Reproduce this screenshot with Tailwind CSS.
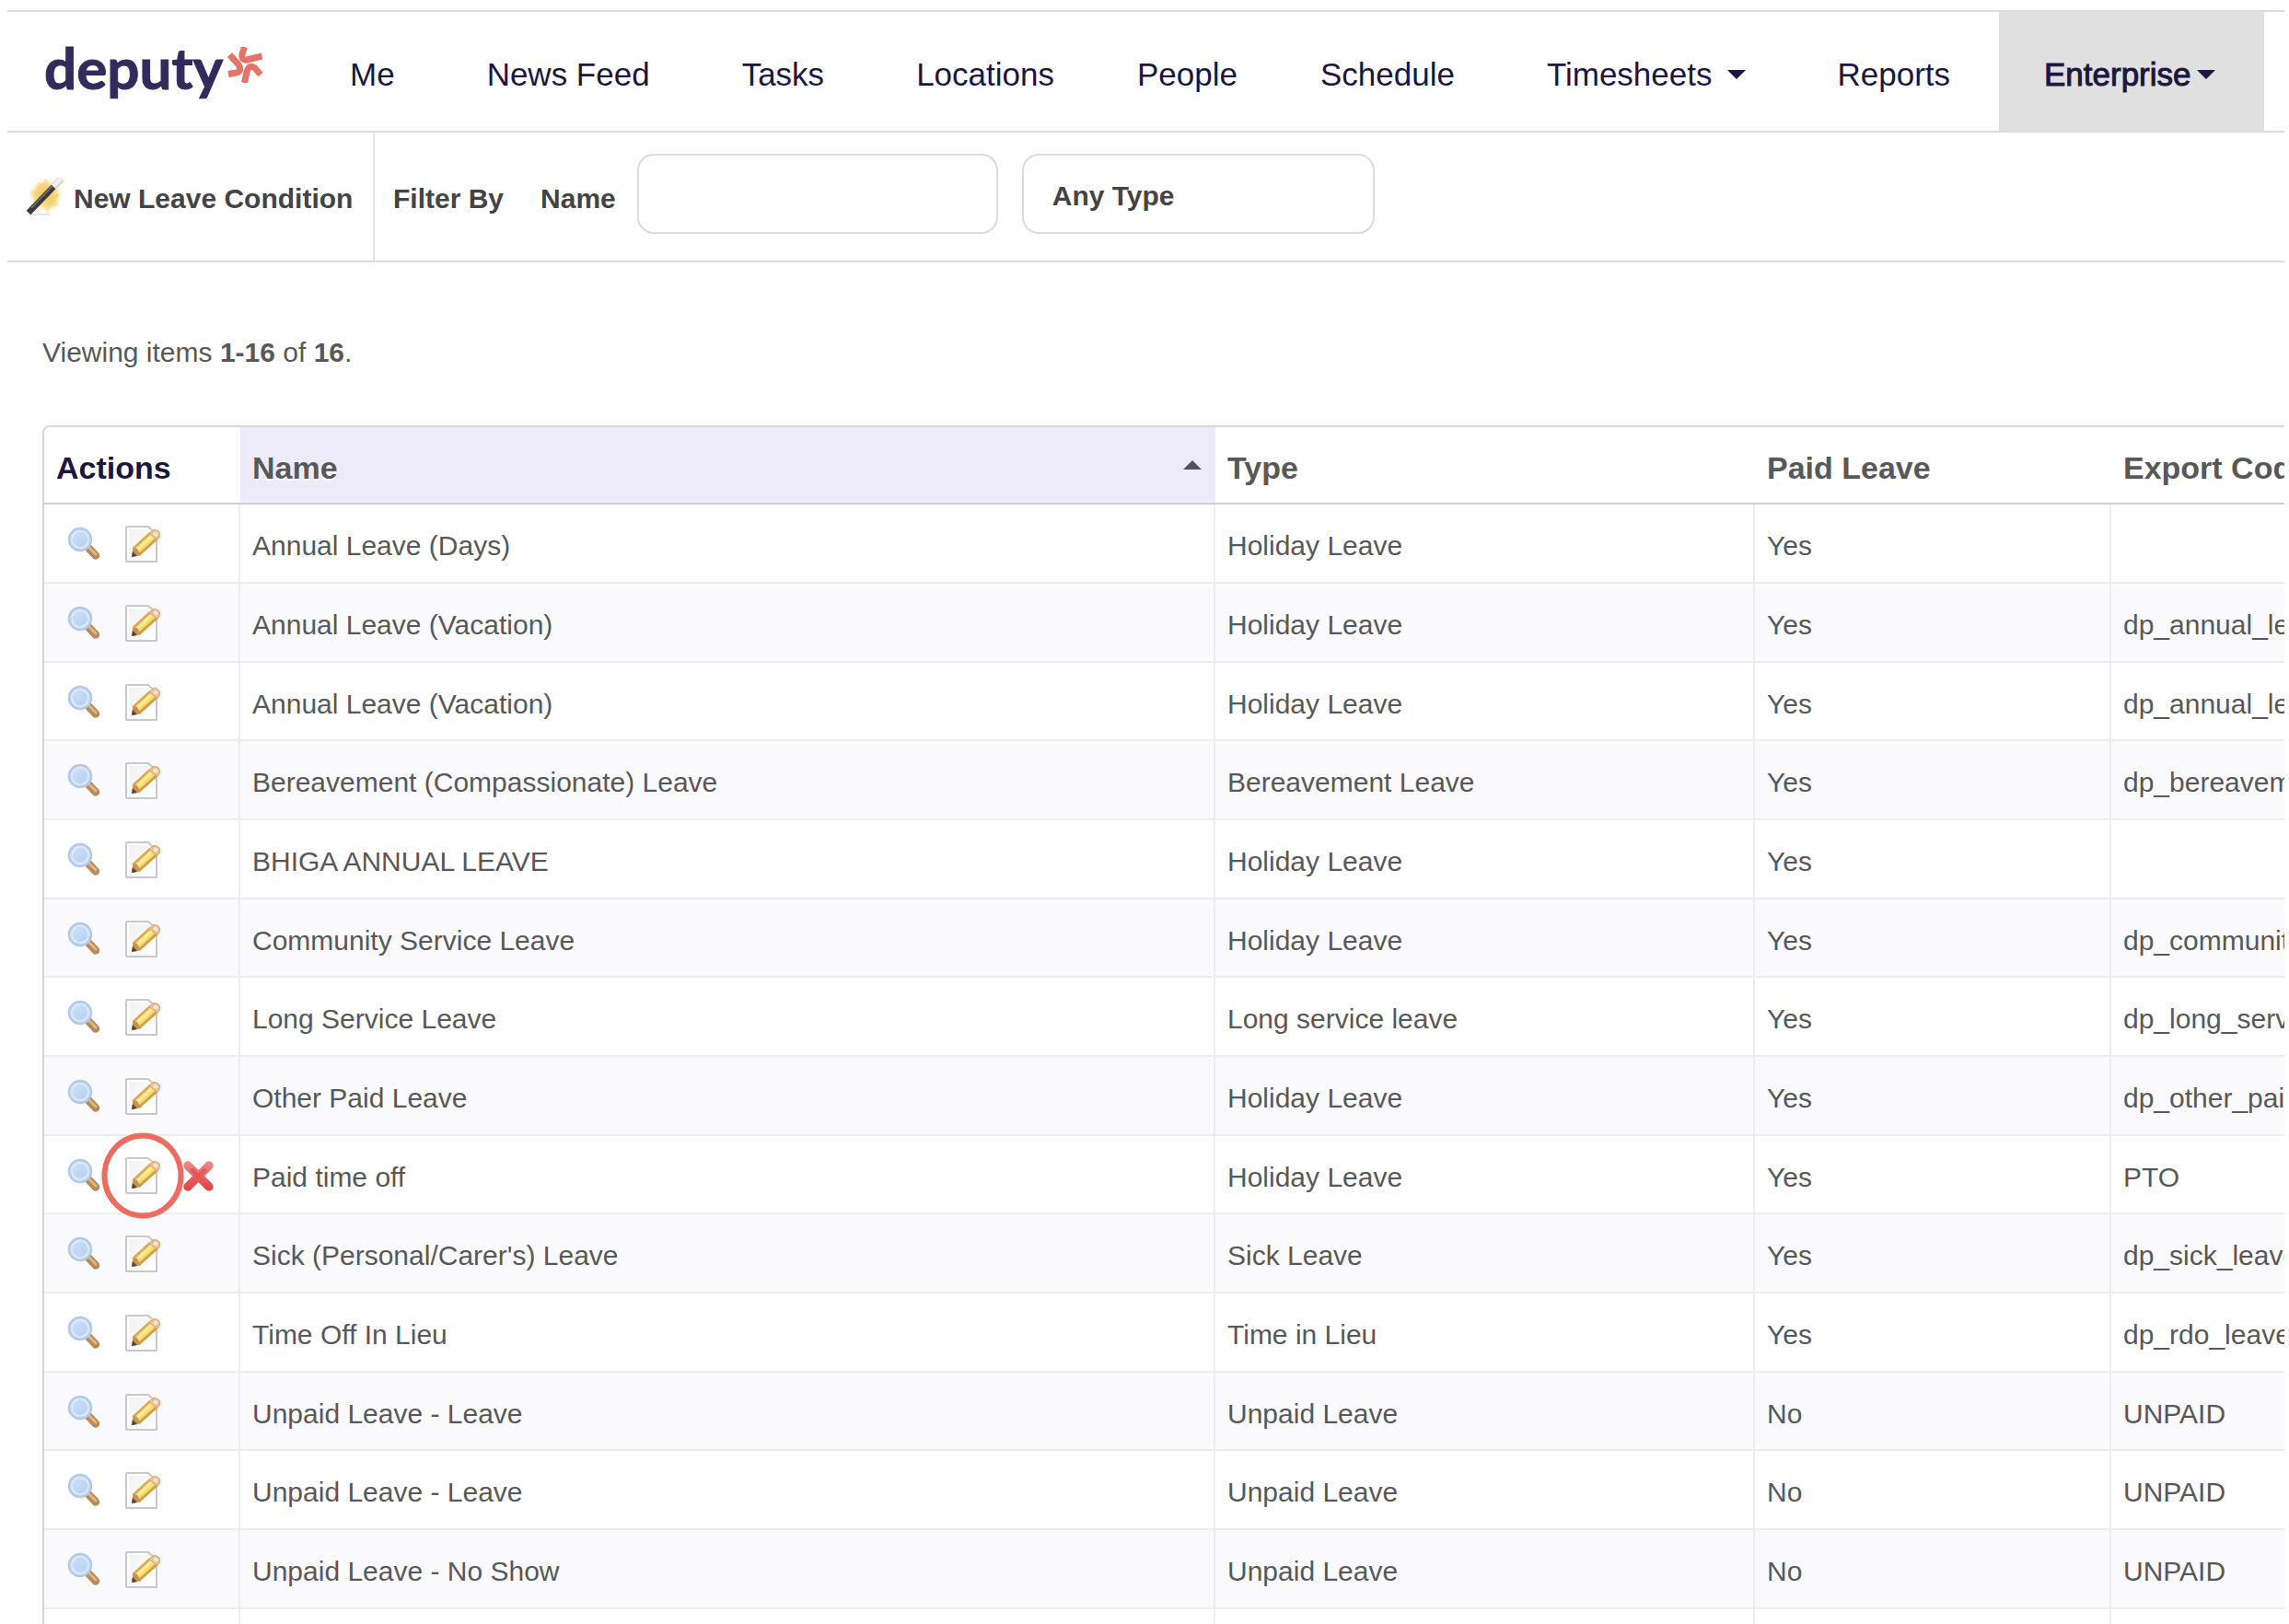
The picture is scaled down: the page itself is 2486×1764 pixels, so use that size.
<!DOCTYPE html>
<html lang="en">
<head>
<meta charset="utf-8">
<title>Leave Conditions</title>
<script src="https://cdn.jsdelivr.net/npm/@tailwindcss/browser@4"></script>
</head>
<body class="bg-white text-[#585858] text-[30px] leading-9 font-['Liberation_Sans',Arial,sans-serif]">
<!-- icon sprites -->
<svg class="absolute size-0" aria-hidden="true">
  <defs>
    <linearGradient id="lens" x1="0" y1="0" x2="1" y2="1"><stop offset="0" stop-color="#cfe1f8"/><stop offset="1" stop-color="#b4cff2"/></linearGradient>
    <linearGradient id="paper" x1="0" y1="0" x2="1" y2="1"><stop offset="0" stop-color="#f1f1f1"/><stop offset="1" stop-color="#ffffff"/></linearGradient>
    <linearGradient id="cross" gradientUnits="userSpaceOnUse" x1="0" y1="4" x2="0" y2="37"><stop offset="0" stop-color="#f08c8c"/><stop offset="1" stop-color="#df4040"/></linearGradient>
    <radialGradient id="glow"><stop offset="0" stop-color="#f0c03c"/><stop offset=".6" stop-color="#f6d77c" stop-opacity=".8"/><stop offset="1" stop-color="#fae6a8" stop-opacity="0"/></radialGradient>
    <symbol id="i-view" viewBox="0 0 40 40">
      <path d="M25 24 L33 32.500" stroke="#b98a58" stroke-width="8.500" stroke-linecap="round"/>
      <path d="M25 23 L33 31" stroke="#dcb78a" stroke-width="3" stroke-linecap="round"/>
      <circle cx="16" cy="15" r="12" fill="#cfe0f7" stroke="#b0c9ec" stroke-width="2.500"/>
      <circle cx="16" cy="15" r="9" fill="url(#lens)" stroke="#dfebfb" stroke-width="1.500"/>
    </symbol>
    <symbol id="i-edit" viewBox="0 0 40 40">
      <path d="M3 1 H26 L35 9 V39 H3 Q2 39 2 38 V2 Q2 1 3 1 Z" fill="url(#paper)" stroke="#c9c9c9" stroke-width="2"/>
      <path d="M4 37 V3 H25" fill="none" stroke="#fff" stroke-width="2"/>
      <path d="M8 34 L9.500 25 L29 7 L37 14 L17 32 Z" fill="#f4dc70"/>
      <path d="M12 28 L31 10" stroke="#fbec9c" stroke-width="3"/>
      <path d="M15.500 32 L35 14.500" stroke="#d3a040" stroke-width="3"/>
      <path d="M9.500 25 L28 8" stroke="#dba85a" stroke-width="2.500"/>
      <path d="M8 34 L9.500 24 L14 25 L18 32 Z" fill="#c79355"/>
      <path d="M8 34 L9 28 L14 33 Z" fill="#5a452c"/>
      <path d="M27 8.500 Q32 2 37 6 Q41 10 36 15.500 Z" fill="#e9bf93" stroke="#d9a46b"/>
      <circle cx="34" cy="9" r="2.500" fill="#f9e3d2"/>
    </symbol>
    <symbol id="i-delete" viewBox="0 0 40 40">
      <path d="M9 9 L32 32 M32 9 L9 32" stroke="url(#cross)" stroke-width="9.500" stroke-linecap="round"/>
      <path d="M14 14 L27 27 M27 14 L14 27" stroke="#e45555" stroke-width="4" stroke-linecap="round"/>
    </symbol>
  </defs>
</svg>

<div class="h-screen overflow-hidden pt-[11px] pl-2 pr-[5px]">
  <header class="flex h-[133px] border-y-2 border-[#dadadf]">
    <a href="#" class="flex w-[322px] shrink-0 pl-10" aria-label="deputy">
      <span class="pt-7 font-['Lato',sans-serif] text-[62px] leading-[64px] font-bold text-[#332b5c] [-webkit-text-stroke:1px_#332b5c]">deputy</span>
      <svg class="mt-[38px] ml-[5px] h-[39px] w-[38px]" viewBox="0 0 38 39" fill="none" stroke="#e57368" stroke-width="7"><path d="M18.500 0 L16 8 Q15 15 21 14 L37.500 10"/><path d="M2.500 8.500 L11 18 Q17 26 10 28 L1 29.500"/><path d="M18.500 39 L21 27 Q24 18 30 23 L36 30"/></svg>
    </a>
    <nav class="flex grow pt-1.5 text-[35px] text-[#1d1640]">
      <a href="#" class="flex items-center px-[50px]">Me</a>
      <a href="#" class="flex items-center px-[50px]">News Feed</a>
      <a href="#" class="flex items-center px-[50px]">Tasks</a>
      <a href="#" class="flex items-center px-[50px]">Locations</a>
      <a href="#" class="flex items-center px-10">People</a>
      <a href="#" class="flex items-center px-[50px]">Schedule</a>
      <a href="#" class="flex items-center gap-4 px-[50px]">Timesheets
        <svg class="h-2.5 w-5" viewBox="0 0 20 10"><path d="M0 0 H20 L10 10 Z" fill="#1d1640"/></svg></a>
      <a href="#" class="flex items-center px-[50px]">Reports</a>
    </nav>
    <a href="#" class="mr-[22px] flex w-[288px] shrink-0 items-center gap-1.5 bg-[#e0e0e0] pt-1.5 pl-[49px] text-[35px] text-[#1d1640] [-webkit-text-stroke:1px_#1d1640]">Enterprise
      <svg class="h-2.5 w-5" viewBox="0 0 20 10"><path d="M0 0 H20 L10 10 Z" fill="#1d1640"/></svg></a>
  </header>

  <form class="flex h-[141px] border-b-2 border-[#dadadf] font-bold text-[#444]">
    <button type="button" class="flex w-[399px] shrink-0 items-center gap-2.5 border-r-2 border-[#e3e3e6] pl-5 text-left">
      <svg class="h-[42px] w-[42px] shrink-0" viewBox="0 0 42 42">
        <circle cx="22" cy="19" r="19" fill="url(#glow)"/>
        <path d="M22 0 L25 8 L21 14 L10 24 L4 15 L11 13 L14 5 L18 7 Z M36 18 L33 24 L36 30 L27 32 L24 40 L20 32 L34 17 Z" fill="#f0c658" opacity=".35"/>
        <path d="M2 40 H26" stroke="#d5d5d5" stroke-width="2" opacity=".6"/>
        <path d="M3 38 L31 9" stroke="#3a3a3a" stroke-width="6.500"/>
        <path d="M6 33 L29 9" stroke="#777" stroke-width="1.500"/>
        <path d="M30 10 L39 1" stroke="#d6d6d9" stroke-width="7.500"/>
        <path d="M30 9 L38 1" stroke="#f3f3f5" stroke-width="4"/>
      </svg>
      <span class="pt-1">New Leave Condition</span>
    </button>
    <div class="flex items-center pl-5">
      <span class="pt-1">Filter By</span>
      <label for="name" class="pt-1 pl-10">Name</label>
      <input id="name" type="text" class="mb-1.5 ml-[23px] h-[87px] w-[392px] rounded-[18px] border-2 border-[#dadadf] px-8">
      <select aria-label="Type" class="mb-1.5 ml-[26px] h-[87px] w-[383px] appearance-none rounded-[18px] border-2 border-[#dadadf] bg-white pt-1 pl-[31px] font-bold"><option>Any Type</option></select>
    </div>
  </form>

  <main class="pt-20 pl-[38px]">
    <p>Viewing items <b>1-16</b> of <b>16</b>.</p>
    <div class="mt-[61px] overflow-hidden rounded-tl-lg border-t-2 border-l-2 border-[#d6d6db]">
      <table class="w-full table-fixed border-separate border-spacing-0 whitespace-nowrap">
        <colgroup><col class="w-[213px]"><col><col class="w-[586px]"><col class="w-[387px]"><col class="w-[188px]"></colgroup>
        <thead class="text-left text-[34px]">
          <tr class="h-[84px] *:border-b-2 *:border-[#ced1d8] *:px-[13px] *:pt-1.5">
            <th class="text-[#1d1640]">Actions</th>
            <th class="bg-[#edebfa] text-shadow-[0_2px_0_#fff]"><div class="flex items-center justify-between pr-0.5">Name
              <svg class="mb-1.5 h-2.5 w-5" viewBox="0 0 20 10"><path d="M10 0 L20 10 H0 Z" fill="#50555c"/></svg></div></th>
            <th>Type</th><th>Paid Leave</th><th>Export Code</th>
          </tr>
        </thead>
        <tbody id="rows"></tbody>
      </table>
    </div>
  </main>
</div>

<script>
const rows = [
  ["Annual Leave (Days)", "Holiday Leave", "Yes", ""],
  ["Annual Leave (Vacation)", "Holiday Leave", "Yes", "dp_annual_leave"],
  ["Annual Leave (Vacation)", "Holiday Leave", "Yes", "dp_annual_leave"],
  ["Bereavement (Compassionate) Leave", "Bereavement Leave", "Yes", "dp_bereavement_leave"],
  ["BHIGA ANNUAL LEAVE", "Holiday Leave", "Yes", ""],
  ["Community Service Leave", "Holiday Leave", "Yes", "dp_community_leave"],
  ["Long Service Leave", "Long service leave", "Yes", "dp_long_service_leave"],
  ["Other Paid Leave", "Holiday Leave", "Yes", "dp_other_paid_leave"],
  ["Paid time off", "Holiday Leave", "Yes", "PTO", true],
  ["Sick (Personal/Carer's) Leave", "Sick Leave", "Yes", "dp_sick_leave"],
  ["Time Off In Lieu", "Time in Lieu", "Yes", "dp_rdo_leave"],
  ["Unpaid Leave - Leave", "Unpaid Leave", "No", "UNPAID"],
  ["Unpaid Leave - Leave", "Unpaid Leave", "No", "UNPAID"],
  ["Unpaid Leave - No Show", "Unpaid Leave", "No", "UNPAID"],
  ["", "", "", ""]
];
const icon = (id, label) => `<button type="button" aria-label="${label}" class="block size-10"><svg class="size-10"><use href="#${id}"/></svg></button>`;
const text = "border-r-2 px-[13px] pt-1.5";
document.getElementById("rows").innerHTML = rows.map(([name, type, paid, code, own]) => `
  <tr class="h-[86px] nth-[3n]:h-[85px] even:bg-[#fafafc] *:border-b-2 *:border-[#ededee]">
    <td class="border-r-2 pt-0.5 pl-[23px]">${name && `<div class="flex items-center">${icon("i-view", "View")}
      <div class="relative mx-5 pl-1">${icon("i-edit", "Edit")}${own ? '<svg class="pointer-events-none absolute -top-[27px] -left-[21px] z-10 h-[94px] w-[90px]" viewBox="0 0 90 94"><ellipse cx="45" cy="47" rx="41.500" ry="43.500" fill="none" stroke="#ef6b60" stroke-width="6"/></svg>' : ""}</div>
      ${own ? icon("i-delete", "Delete") : ""}</div>`}</td>
    <td class="${text}">${name}</td><td class="${text}">${type}</td><td class="${text}">${paid}</td><td class="overflow-hidden pt-1.5 pl-[13px]">${code}</td>
  </tr>`).join("");
</script>
</body>
</html>
